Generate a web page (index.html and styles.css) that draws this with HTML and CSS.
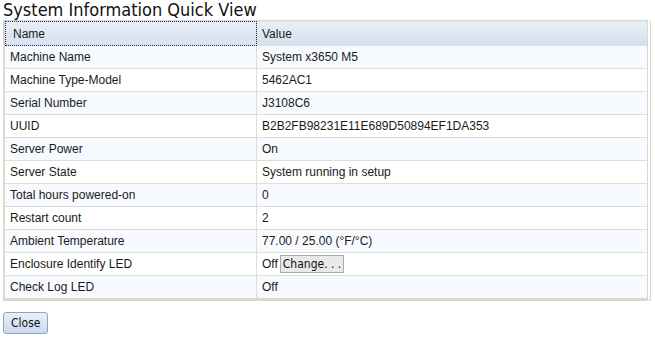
FILE: index.html
```html
<!DOCTYPE html>
<html lang="en">
<head>
    <meta charset="UTF-8">
    <title>System Information Quick View</title>
    <link rel="stylesheet" href="styles.css">
</head>
<body>
    <h1 class="title">System Information Quick View</h1>
    <div class="grid-wrap">
        <table class="grid">
            <thead>
                <tr>
                    <th class="focused">Name</th>
                    <th>Value</th>
                </tr>
            </thead>
            <tbody>
                <tr class="alt"><td>Machine Name</td><td>System x3650 M5</td></tr>
                <tr><td>Machine Type-Model</td><td>5462AC1</td></tr>
                <tr class="alt"><td>Serial Number</td><td>J3108C6</td></tr>
                <tr><td>UUID</td><td>B2B2FB98231E11E689D50894EF1DA353</td></tr>
                <tr class="alt"><td>Server Power</td><td>On</td></tr>
                <tr><td>Server State</td><td>System running in setup</td></tr>
                <tr class="alt"><td>Total hours powered-on</td><td>0</td></tr>
                <tr><td>Restart count</td><td>2</td></tr>
                <tr class="alt"><td>Ambient Temperature</td><td>77.00 / 25.00 (&deg;F/&deg;C)</td></tr>
                <tr><td>Enclosure Identify LED</td><td>Off<button class="change-btn">Change. . .</button></td></tr>
                <tr class="alt"><td>Check Log LED</td><td>Off</td></tr>
            </tbody>
        </table>
    </div>
    <button class="close-btn">Close</button>
</body>
</html>
```

FILE: styles.css
```css
body {
    margin: 0;
    padding: 0 3px;
    background: #fff;
    font-family: "Liberation Sans", Arial, sans-serif;
    font-size: 12px;
    color: #1a1a1a;
}

.title {
    margin: 0;
    font-family: "DejaVu Sans Condensed", "DejaVu Sans", Tahoma, sans-serif;
    font-weight: normal;
    font-size: 18px;
    line-height: 20px;
    color: #111;
}

.grid-wrap {
    width: 644px;
    border: 1px solid #d9d8cf;
    border-top: none;
    padding-right: 2px;
}

.grid {
    width: 100%;
    border-collapse: collapse;
    border-right: 1px solid #d9d8cf;
}

.grid th {
    height: 25px;
    padding: 0 5px;
    text-align: left;
    font-weight: normal;
    background: linear-gradient(#e8eff6, #d3e0ec);
    border-top: 1px solid #d9d8cf;
    border-left: 1px solid #d9d8cf;
}

.grid th.focused {
    width: 238px;
    padding-left: 8px;
    outline: 1px dotted #1a2a6a;
    outline-offset: -1px;
}

.grid td {
    height: 22px;
    padding: 0 5px;
    border-bottom: 1px solid #e1ddd2;
    border-left: 1px solid #e1ddd2;
}

.grid tr:last-child td {
    border-bottom: 2px solid #d9d8cf;
}

.grid tr.alt td {
    background: #f7fbff;
}

.change-btn {
    margin: 0 0 0 2px;
    padding: 1px 2px;
    font-family: "DejaVu Sans Condensed", "DejaVu Sans", Tahoma, sans-serif;
    font-size: 12px;
    background: #e9e9e9;
    border: 1px solid #aaa;
    color: #111;
}

.close-btn {
    margin-top: 11px;
    height: 22px;
    padding: 0 7px;
    font-family: "DejaVu Sans Condensed", "DejaVu Sans", Tahoma, sans-serif;
    font-size: 12px;
    color: #111;
    background: linear-gradient(#e8f0f8, #c9daec);
    border: 1px solid #8aa6c3;
    border-radius: 3px;
}
```
